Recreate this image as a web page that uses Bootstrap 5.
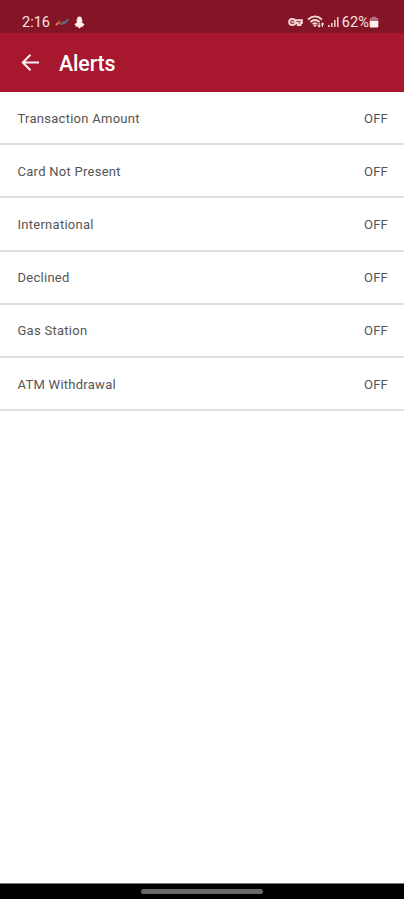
<!DOCTYPE html>
<html lang="en">
<head>
<meta charset="utf-8">
<meta name="viewport" content="width=device-width, initial-scale=1">
<title>Alerts</title>
<link href="https://cdn.jsdelivr.net/npm/bootstrap@5.3.0/dist/css/bootstrap.min.css" rel="stylesheet">
<style>
body { font-family: Roboto, sans-serif; background: #fff; overflow: hidden; }
.screen { height: 899px; }
.status-bar { height: 33px; background: #831526; color: #fbe4e4; padding: 11px 25px 0 22px; font-size: 14.5px; line-height: 22px; }
.status-bar svg { display: block; }
.status-bar span { padding-top: 1px; }
.clock { width: 33px; }
.battery-level { margin-left: 3px; letter-spacing: .15px; }
.app-bar { height: 59px; background: #a7182f; padding: 1px 21px 0; }
.app-title { font-size: 21.3px; font-weight: 500; line-height: 26px; margin-left: 19px; padding-top: 1px; letter-spacing: -.1px; }
.alert-rows > .list-group-item { height: 53.2px; padding: 2px 16px 0 17.5px; border: 0; border-bottom: 2px solid #dedede; font-size: 13px; line-height: 20px; color: #555; letter-spacing: .27px; }
.alert-rows .state { letter-spacing: .2px; }
.system-nav { height: 16px; background: #000; border-top: 1px solid #777; }
.home-pill { width: 122px; height: 5px; background: #696969; }
</style>
<script src="https://cdn.jsdelivr.net/npm/bootstrap@5.3.0/dist/js/bootstrap.bundle.min.js"></script>
</head>
<body>
<div class="screen d-flex flex-column">
  <div class="status-bar d-flex align-items-center justify-content-between">
    <div class="d-flex align-items-center">
      <span class="clock">2:16</span>
      <svg width="14" height="12" viewBox="0 0 14 12" fill="none" stroke-linecap="round" stroke-width="2">
        <path d="M1.5 8.5 4 6.5" stroke="#ef7650"/><path d="M4 5.5 6.2 8" stroke="#a84c45"/><path d="M7 8 8.8 6.2 10 7 12.7 3.6" stroke="#527486"/>
      </svg>
      <svg class="ms-1" width="13" height="13" viewBox="0 0 13 13" fill="#fff0ef">
        <path d="M6.5.5C4.6.5 4 1.8 4.2 3.4L3 4.4l1.3 1C4 6.5 2.9 7.2 1.3 8.2l1.3 1-.2 1.4 2 .1 2.1 1.8 2-1.8 2-.1-.1-1.4 1.3-1C10.2 7.4 9 6.5 8.7 5.4l1.2-1-1.2-1C9 1.8 8.3.5 6.5.5Z"/>
      </svg>
    </div>
    <div class="d-flex align-items-center">
      <svg width="15" height="10" viewBox="0 0 15 10" fill="none" stroke="#f5d3d3" stroke-width="2">
        <circle cx="4.3" cy="5" r="3.1"/><path d="M7 3.2h6.8v2.7h-1.3v2H9.8v-2H7"/><path d="M3.6 5h2"/>
      </svg>
      <svg class="ms-1" width="18" height="14" viewBox="0 0 18 14" fill="none" stroke="#f7d9d8" stroke-width="1.7">
        <path d="M1 4.5Q8 -1.8 15 4.5M3.4 7Q8 3 12.6 7M5.6 9.2Q8 7.3 10 9.1"/><path d="M6.7 10h2.6L8 11.8Z" fill="#f7d9d8" stroke-width=".8"/><path d="M12.2 12V8m-1.5 2.2 1.5 1.8 1.3-1.5M15.4 8v4m-1.2-2.5L15.4 8l1.4 1.5" stroke-width="1.1"/>
      </svg>
      <svg width="14" height="12" viewBox="-2 0 14 12" fill="#f3cccd">
        <path d="M1 9h1.6v2H1zM4 7h1.6v4H4zM7 4h1.6v7H7zM10 1h1.5v10H10z"/>
      </svg>
      <span class="battery-level">62%</span>
      <svg width="10" height="12" viewBox="0 0 10 12">
        <path d="M3 .7h4v1.1h1.3q1 0 1 1V6H.7V2.8q0-1 1-1H3Z" fill="#b66a77"/><path d="M.7 5h8.6v5.2q0 1.2-1.2 1.2H1.9Q.7 11.4.7 10.2Z" fill="#fff1ef"/>
      </svg>
    </div>
  </div>
  <header class="app-bar d-flex align-items-center text-white">
    <svg width="19" height="18" viewBox="0 0 19 18" fill="none" stroke="#fff0f1" stroke-width="2"><path d="M18 8.500H2M9.500.8 1.800 8.500l7.700 7.700"/></svg>
    <h1 class="app-title mb-0">Alerts</h1>
  </header>
  <ul class="alert-rows list-group rounded-0">
    <li class="list-group-item d-flex align-items-center justify-content-between"><span>Transaction Amount</span><span class="state">OFF</span></li>
    <li class="list-group-item d-flex align-items-center justify-content-between"><span>Card Not Present</span><span class="state">OFF</span></li>
    <li class="list-group-item d-flex align-items-center justify-content-between"><span>International</span><span class="state">OFF</span></li>
    <li class="list-group-item d-flex align-items-center justify-content-between"><span>Declined</span><span class="state">OFF</span></li>
    <li class="list-group-item d-flex align-items-center justify-content-between"><span>Gas Station</span><span class="state">OFF</span></li>
    <li class="list-group-item d-flex align-items-center justify-content-between"><span>ATM Withdrawal</span><span class="state">OFF</span></li>
  </ul>
  <div class="system-nav mt-auto d-flex align-items-center justify-content-center"><div class="home-pill rounded-pill"></div></div>
</div>
</body>
</html>
